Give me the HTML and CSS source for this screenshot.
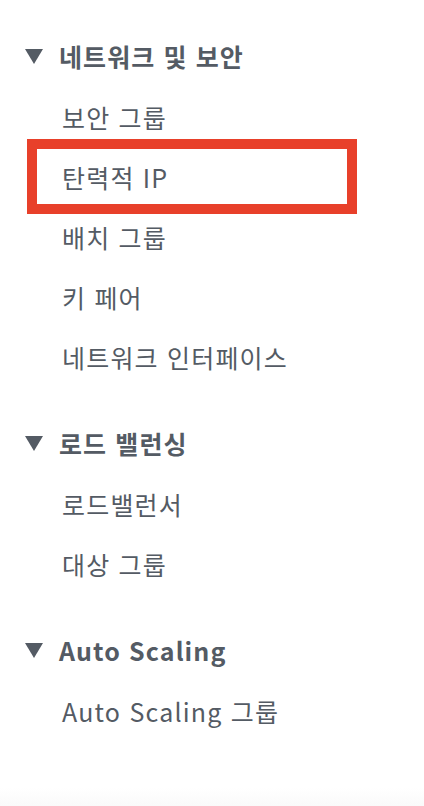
FILE: index.html
```html
<!DOCTYPE html>
<html lang="ko">
<head>
<meta charset="utf-8">
<link rel="stylesheet" href="styles.css">
</head>
<body>
<nav class="nav">
  <section class="section">
    <div class="heading"><span class="caret"></span><span>네트워크 및 보안</span></div>
    <ul class="items">
      <li class="item">보안 그룹</li>
      <li class="item highlighted">탄력적 IP</li>
      <li class="item">배치 그룹</li>
      <li class="item">키 페어</li>
      <li class="item">네트워크 인터페이스</li>
    </ul>
  </section>
  <section class="section">
    <div class="heading"><span class="caret"></span><span>로드 밸런싱</span></div>
    <ul class="items">
      <li class="item">로드밸런서</li>
      <li class="item">대상 그룹</li>
    </ul>
  </section>
  <section class="section">
    <div class="heading"><span class="caret"></span><span>Auto Scaling</span></div>
    <ul class="items">
      <li class="item">Auto Scaling 그룹</li>
    </ul>
  </section>
</nav>
<div class="fade"></div>
</body>
</html>
```
FILE: styles.css
```css
html, body {
  margin: 0;
  padding: 0;
  background: #ffffff;
}
body {
  width: 424px;
  height: 806px;
  overflow: hidden;
  position: relative;
  font-family: "Noto Sans CJK KR", "Noto Sans", sans-serif;
  color: #545b64;
}
.nav {
  display: flex;
  flex-direction: column;
  gap: 24px;
  padding-top: 24px;
}
.heading {
  height: 63px;
  display: flex;
  align-items: center;
  gap: 16px;
  padding-left: 25px;
  font-size: 25px;
  font-weight: 700;
  letter-spacing: 1.1px;
  color: #545b64;
  box-sizing: border-box;
}
.caret {
  width: 0;
  height: 0;
  border-left: 9px solid transparent;
  border-right: 9px solid transparent;
  border-top: 15px solid #545b64;
  margin-top: 1px;
}
.items {
  list-style: none;
  margin: 0;
  padding: 0;
}
.item {
  height: 60px;
  display: flex;
  align-items: center;
  padding-left: 62px;
  font-size: 25px;
  font-weight: 400;
  letter-spacing: 1.2px;
  position: relative;
}
.highlighted::after {
  content: "";
  position: absolute;
  left: 27px;
  width: 330px;
  top: -8px;
  height: 75px;
  border: 10px solid #e8402a;
  box-sizing: border-box;
}
.fade {
  position: absolute;
  left: 0;
  right: 0;
  bottom: 0;
  height: 18px;
  background: linear-gradient(to bottom, rgba(240,240,240,0), rgba(240,240,240,0.35));
}
```
